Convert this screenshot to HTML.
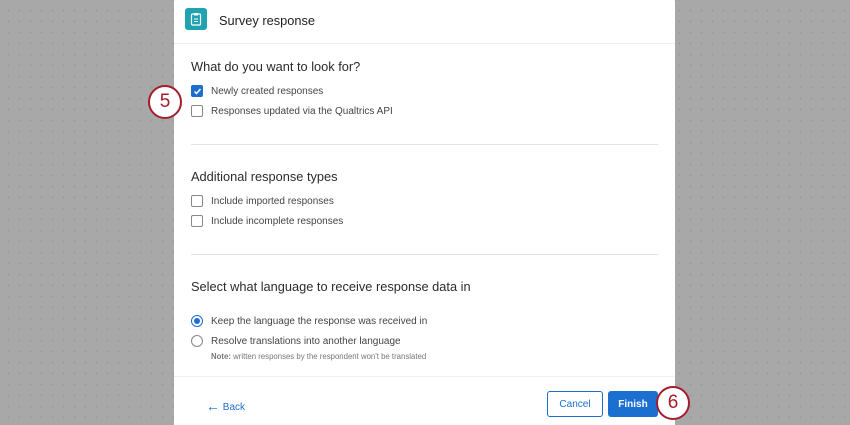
<!DOCTYPE html><html><head><style>
html,body{margin:0;width:850px;height:425px;overflow:hidden}
body{background:#a8a8a8;font-family:"Liberation Sans",sans-serif;position:relative;
background-image:radial-gradient(circle,#9a9a9a 1px,transparent 1.2px);background-size:11px 11px;background-position:3px 5px}
.modal{position:absolute;left:174px;top:-4px;width:501px;height:429px;background:#fff;border-radius:6px 6px 0 0}
.t{position:absolute;color:#333;white-space:nowrap}
.h{font-size:12.8px;color:#2b2b2b}
.l{font-size:10px;color:#444}
.cb{position:absolute;width:10px;height:10px;border:1px solid #888;border-radius:2px;background:#fff}
.rd{position:absolute;width:10px;height:10px;border:1px solid #888;border-radius:50%;background:#fff}
.hr{position:absolute;left:17px;width:467px;height:1px;background:#e3e3e3}
.circ{position:absolute;width:30px;height:30px;border:2.5px solid #a31d2c;border-radius:50%;background:#fff;color:#a31d2c;font-size:19px;text-align:center;line-height:30px}
.btn{position:absolute;display:flex;align-items:center;justify-content:center;font-size:10px;border-radius:3px;box-sizing:border-box}
</style></head><body>
<div class="modal">
<div style="position:absolute;left:11px;top:12px;width:22px;height:22px;background:#1fa3b0;border-radius:3px"></div>
<svg style="position:absolute;left:16px;top:16px" width="12" height="14" viewBox="0 0 12 14"><rect x="1.5" y="2" width="9" height="11" rx="1" fill="none" stroke="#fff" stroke-width="1.2"/><rect x="4" y="1" width="4" height="2.5" fill="#fff"/><path d="M4 7h4M4 9.5h4" stroke="#fff" stroke-width="1"/></svg>
<div class="t" style="left:45px;top:17px;font-size:12.8px;color:#222">Survey response</div>
<div class="hr" style="top:47px;left:0;width:501px;background:#eee"></div>
<div class="t h" style="left:17px;top:63px">What do you want to look for?</div>
<div class="cb" style="left:17px;top:89px;background:#1b6fd1;border-color:#1b6fd1"></div>
<svg style="position:absolute;left:19px;top:91px" width="9" height="9"><path d="M1.5 4.5l2 2 4-4.5" stroke="#fff" stroke-width="1.5" fill="none"/></svg>
<div class="t l" style="left:37px;top:90px">Newly created responses</div>
<div class="cb" style="left:17px;top:109px"></div>
<div class="t l" style="left:37px;top:110px">Responses updated via the Qualtrics API</div>
<div class="hr" style="top:148px"></div>
<div class="t h" style="left:17px;top:173px">Additional response types</div>
<div class="cb" style="left:17px;top:199px"></div>
<div class="t l" style="left:37px;top:200px">Include imported responses</div>
<div class="cb" style="left:17px;top:219px"></div>
<div class="t l" style="left:37px;top:220px">Include incomplete responses</div>
<div class="hr" style="top:258px"></div>
<div class="t h" style="left:17px;top:283px">Select what language to receive response data in</div>
<div class="rd" style="left:17px;top:319px;border-color:#1b6fd1"></div>
<div style="position:absolute;left:20px;top:322px;width:6px;height:6px;border-radius:50%;background:#1b6fd1"></div>
<div class="t l" style="left:37px;top:320px">Keep the language the response was received in</div>
<div class="rd" style="left:17px;top:339px"></div>
<div class="t l" style="left:37px;top:340px">Resolve translations into another language</div>
<div class="t" style="left:37px;top:356px;font-size:7.8px;color:#777"><b>Note:</b> written responses by the respondent won't be translated</div>
<div class="hr" style="top:380px;left:0;width:501px;background:#f0f0f0"></div>
<div class="t" style="left:32px;top:401px;font-size:10px;color:#1b6fd1"><span style="font-size:14px;position:relative;top:1px">←</span> Back</div>
<div class="btn" style="left:373px;top:395px;width:56px;height:26px;border:1px solid #1b6fd1;color:#1b6fd1">Cancel</div>
<div class="btn" style="left:434px;top:395px;width:50px;height:26px;background:#1b6fd1;color:#fff;font-weight:bold">Finish</div>
</div>
<div class="circ" style="left:148px;top:85px">5</div>
<div class="circ" style="left:656px;top:386px">6</div>
</body></html>
